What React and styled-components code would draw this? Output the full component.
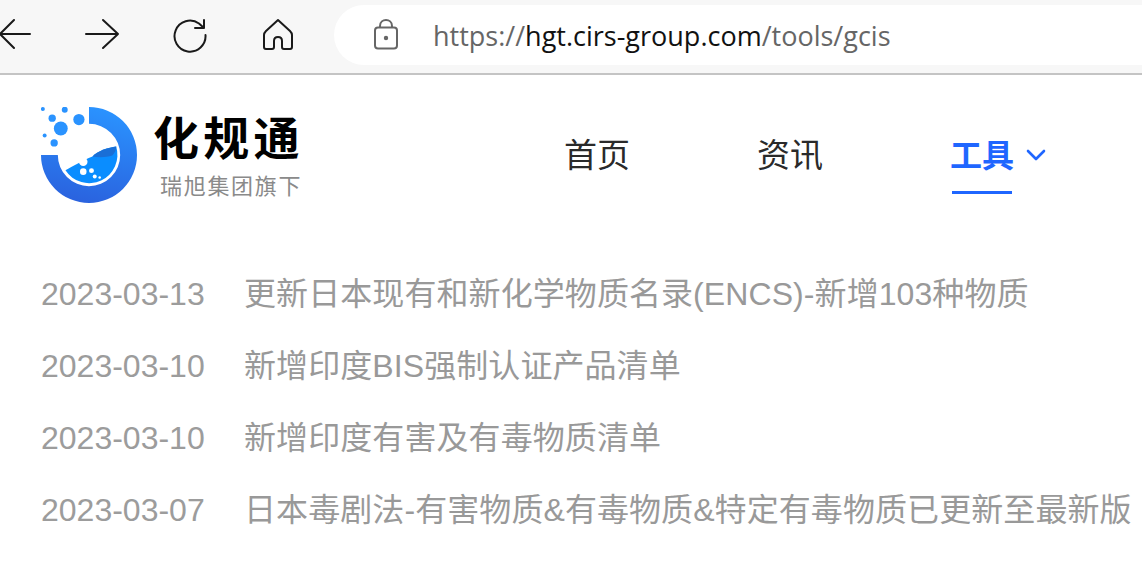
import React from "react";
import styled, { createGlobalStyle } from "styled-components";

const Global = createGlobalStyle`
	html, body {
		margin: 0;
		padding: 0;
		background: #fff;
		overflow: hidden;
	}
	body {
		font-family: "Liberation Sans", "Noto Sans CJK SC", sans-serif;
	}
`;

const Page = styled.div`
	width: 1142px;
	height: 582px;
	overflow: hidden;
`;

const BrowserBar = styled.div`
	height: 70px;
	padding-bottom: 3px;
	display: flex;
	align-items: center;
	background: #f7f7f7;
	border-bottom: 2px solid #c4c4c4;
`;

const NavIcon = styled.svg`
	flex: none;
	width: 36px;
	height: 36px;
	margin-left: ${(p) => p.$left}px;
	fill: none;
	stroke: #1a1a1a;
	stroke-width: 2;
	stroke-linecap: round;
	stroke-linejoin: round;
`;

const AddressBar = styled.div`
	flex: none;
	width: 840px;
	height: 60px;
	margin-left: 38px;
	display: flex;
	align-items: center;
	background: #fff;
	border-radius: 30px;
	padding-left: 37px;
`;

const LockIcon = styled.svg`
	width: 30px;
	height: 30px;
	fill: none;
	stroke: #666;
	stroke-width: 2;
	overflow: visible;
`;

const Url = styled.div`
	margin-left: 32px;
	font-family: "Open Sans", sans-serif;
	font-size: 27px;
	color: #666;
	white-space: nowrap;
	b {
		font-weight: 400;
		color: #111;
	}
`;

const Header = styled.header`
	display: flex;
	align-items: flex-start;
	height: 168px;
	padding: 32px 0 0 41px;
	box-sizing: border-box;
`;

const Brand = styled.div`
	display: flex;
	width: 523px;
	flex: none;
`;

const BrandText = styled.div`
	margin-left: 16px;
`;

const BrandName = styled.div`
	font-family: "Noto Sans CJK SC", sans-serif;
	font-size: 46px;
	line-height: 56px;
	font-weight: 700;
	letter-spacing: 4.3px;
	color: #000;
`;

const BrandSub = styled.div`
	margin: 7px 0 0 7px;
	font-family: "Noto Sans CJK SC", sans-serif;
	font-size: 22px;
	line-height: 28px;
	letter-spacing: 1.7px;
	color: #8a8a8a;
`;

const Menu = styled.nav`
	display: flex;
	gap: 127px;
	padding-top: 23px;
`;

const MenuItem = styled.div`
	position: relative;
	display: flex;
	align-items: center;
	font-family: "Noto Sans CJK SC", sans-serif;
	font-size: ${(p) => (p.$active ? 32 : 33)}px;
	line-height: 46px;
	font-weight: ${(p) => (p.$active ? 700 : 400)};
	color: ${(p) => (p.$active ? "#1f66ff" : "#2a2a2a")};
`;

const Underline = styled.span`
	position: absolute;
	left: 2px;
	top: 61px;
	width: 60px;
	height: 3px;
	background: #1f66ff;
`;

const Chevron = styled.svg`
	width: 22px;
	height: 22px;
	margin: 4px 0 0 11px;
	fill: none;
	stroke: #1f66ff;
	stroke-width: 2.6;
	stroke-linecap: round;
	stroke-linejoin: round;
`;

const NewsList = styled.ul`
	list-style: none;
	margin: 0;
	padding: 15px 0 0 41px;
`;

const NewsRow = styled.li`
	display: flex;
	height: 72px;
	align-items: baseline;
	line-height: 72px;
	font-size: 32px;
	color: #999;
	white-space: nowrap;
`;

const NewsDate = styled.span`
	width: 203px;
	flex: none;
	color: #9c9c9c;
`;

const NewsTitle = styled.span`
	letter-spacing: 0.08px;
`;

const Logo = () => (
	<svg width="96" height="96" viewBox="0 0 97 97" style={{ flex: "none" }}>
		<defs>
			<linearGradient id="ring" x1="0.6" y1="0" x2="0.4" y2="1">
				<stop offset="0" stopColor="#2a93ff" />
				<stop offset="1" stopColor="#2a62de" />
			</linearGradient>
		</defs>
		<path d="M48.5 0A48.5 48.5 0 1 1 0 48.5H17A31.5 31.5 0 1 0 48.5 17Z" fill="url(#ring)" />
		<path d="M24.7 64C32 60 42 54 52 50C58 44 68 41 76 40A28.600 28.600 0 0 1 24.7 64Z" fill="#0a8dff" />
		<path d="M52 50C58 44 68 41 76 40C76 44 74 47 72 49C66 51 58 51 52 50Z" fill="#1a6fd6" />
		<circle cx="42.700" cy="55.300" r="4.300" fill="#fff" />
		<circle cx="42.700" cy="65.300" r="3.300" fill="#fff" />
		<circle cx="51" cy="64.300" r="2.500" fill="#fff" />
		<circle cx="54.300" cy="70.300" r="2" fill="#fff" />
		<circle cx="59.300" cy="71.300" r="1.300" fill="#fff" />
		<circle cx="1.900" cy="2" r="2" fill="#2a93ff" />
		<circle cx="24" cy="2.700" r="3" fill="#2a93ff" />
		<circle cx="11.300" cy="11.300" r="3.700" fill="#2a93ff" />
		<circle cx="38.300" cy="12.700" r="5.700" fill="#2a93ff" />
		<circle cx="20" cy="21.700" r="7" fill="#2a93ff" />
		<circle cx="3.700" cy="28.700" r="2" fill="#2a93ff" />
		<circle cx="13.300" cy="36.300" r="3.700" fill="#2a93ff" />
	</svg>
);

const news = [
	{ date: "2023-03-13", title: "更新日本现有和新化学物质名录(ENCS)-新增103种物质" },
	{ date: "2023-03-10", title: "新增印度BIS强制认证产品清单" },
	{ date: "2023-03-10", title: "新增印度有害及有毒物质清单" },
	{ date: "2023-03-07", title: "日本毒剧法-有害物质&有毒物质&特定有毒物质已更新至最新版" },
];

const App = () => (
	<Page>
		<Global />
		<BrowserBar>
			<NavIcon $left={-3} viewBox="0 0 36 36">
				<path d="M33 17H3M17 3L3 17L17 31" />
			</NavIcon>
			<NavIcon $left={52} viewBox="0 0 36 36">
				<path d="M1 17H33M18 3L33 17L18 31" />
			</NavIcon>
			<NavIcon $left={52} viewBox="0 0 36 36">
				<path d="M32.500 18A15.500 15.500 0 1 1 26 6.500L31 11M31 3V11H22" />
			</NavIcon>
			<NavIcon $left={51} viewBox="0 0 36 36">
				<path d="M18 3L6 14C4.500 15.500 4 16.500 4 18V30C4 31 5 32 6 32H12C13 32 14 31 14 30V24C14 21 16 20 18 20C20 20 22 21 22 24V30C22 31 23 32 24 32H30C31 32 32 31 32 30V18C32 16.500 31.500 15.500 30 14Z" />
			</NavIcon>
			<AddressBar>
				<LockIcon viewBox="0 0 30 30">
					<rect x="4" y="7.500" width="22" height="21" rx="3" />
					<path d="M9 7.500V6C9 2 12 0 15 0C18 0 21 2 21 6V7.500" />
					<circle cx="15" cy="18" r="1.200" fill="#666" />
				</LockIcon>
				<Url>
					https://<b>hgt.cirs-group.com</b>/tools/gcis
				</Url>
			</AddressBar>
		</BrowserBar>
		<Header>
			<Brand>
				<Logo />
				<BrandText>
					<BrandName>化规通</BrandName>
					<BrandSub>瑞旭集团旗下</BrandSub>
				</BrandText>
			</Brand>
			<Menu>
				<MenuItem>首页</MenuItem>
				<MenuItem>资讯</MenuItem>
				<MenuItem $active>
					工具
					<Chevron viewBox="0 0 22 22">
						<path d="M3 7L11 15L19 7" />
					</Chevron>
					<Underline />
				</MenuItem>
			</Menu>
		</Header>
		<NewsList>
			{news.map((item) => (
				<NewsRow key={item.title}>
					<NewsDate>{item.date}</NewsDate>
					<NewsTitle>{item.title}</NewsTitle>
				</NewsRow>
			))}
		</NewsList>
	</Page>
);

export default App;
